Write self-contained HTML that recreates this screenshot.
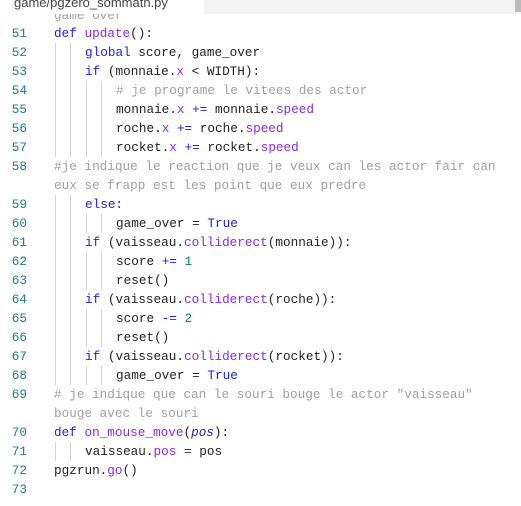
<!DOCTYPE html>
<html><head><meta charset="utf-8"><style>
body{margin:0;width:521px;height:506px;background:#fff;overflow:hidden;position:relative;font-family:"Liberation Mono",monospace;font-size:12.7px}
.hdr{position:absolute;left:0;top:0;width:521px;height:14px;background:#f3f3f3}
.tab{position:absolute;left:0;top:-6px;width:204px;height:20px;background:#fff;font-family:"Liberation Sans",sans-serif;font-size:13px;color:#444;padding-left:14px;box-sizing:border-box;line-height:18px}
.ln{position:absolute;left:0;width:27px;text-align:right;color:#237893;line-height:19px}
.c{position:absolute;white-space:pre;color:#222;line-height:19px}
.g{position:absolute;width:1px;background:#d3d3d3;height:19px}
.a{position:absolute;left:55px;width:1px;background:#d3d3d3}
.b{position:absolute;left:70px;width:1px;background:#d3d3d3}
.k{color:#1f1fdf}.f{color:#8a2be2}.cm{color:#a0a0a0}.n{color:#098658}.o{color:#1f1fdf}
</style></head><body>
<div class="hdr"></div>
<div class="tab">game/pgzero_sommath.py</div>
<div style="position:absolute;right:0;top:0;width:6px;height:12px;background:#bbb"></div>
<div class="c cm" style="left:54px;top:14px;clip-path:inset(8px 0 0 0);margin-top:-8px">game over</div>
<div class="a" style="top:43px;height:114px"></div><div class="b" style="top:43px;height:114px"></div>
<div class="a" style="top:195px;height:190px"></div><div class="b" style="top:195px;height:190px"></div>
<div class="a" style="top:442px;height:19px"></div><div class="b" style="top:442px;height:19px"></div>
<div class="ln" style="top:24px">51</div><div class="c" style="left:54px;top:24px"><span class="k">def</span> <span class="f">update</span>():</div>
<div class="ln" style="top:43px">52</div><div class="c" style="left:85px;top:43px"><span class="k">global</span> score, game_over</div>
<div class="ln" style="top:62px">53</div><div class="c" style="left:85px;top:62px"><span class="k">if</span> (monnaie.<span class="f">x</span> &lt; WIDTH):</div>
<div class="ln" style="top:81px">54</div><div class="g" style="left:86px;top:81px;height:76px"></div><div class="g" style="left:101px;top:81px;height:76px"></div><div class="c cm" style="left:116px;top:81px"># je programe le vitees des actor</div>
<div class="ln" style="top:100px">55</div><div class="c" style="left:116px;top:100px">monnaie.<span class="f">x</span> <span class="o">+=</span> monnaie.<span class="f">speed</span></div>
<div class="ln" style="top:119px">56</div><div class="c" style="left:116px;top:119px">roche.<span class="f">x</span> <span class="o">+=</span> roche.<span class="f">speed</span></div>
<div class="ln" style="top:138px">57</div><div class="c" style="left:116px;top:138px">rocket.<span class="f">x</span> <span class="o">+=</span> rocket.<span class="f">speed</span></div>
<div class="ln" style="top:157px">58</div><div class="c cm" style="left:54px;top:157px">#je indique le reaction que je veux can les actor fair can</div>
<div class="c cm" style="left:54px;top:176px">eux se frapp est les point que eux predre</div>
<div class="ln" style="top:195px">59</div><div class="c k" style="left:85px;top:195px">else:</div>
<div class="ln" style="top:214px">60</div><div class="g" style="left:86px;top:214px"></div><div class="g" style="left:101px;top:214px"></div><div class="c" style="left:116px;top:214px">game_over = <span class="k">True</span></div>
<div class="ln" style="top:233px">61</div><div class="c" style="left:85px;top:233px"><span class="k">if</span> (vaisseau.<span class="f">colliderect</span>(monnaie)):</div>
<div class="ln" style="top:252px">62</div><div class="g" style="left:86px;top:252px;height:38px"></div><div class="g" style="left:101px;top:252px;height:38px"></div><div class="c" style="left:116px;top:252px">score <span class="o">+=</span> <span class="n">1</span></div>
<div class="ln" style="top:271px">63</div><div class="c" style="left:116px;top:271px">reset()</div>
<div class="ln" style="top:290px">64</div><div class="c" style="left:85px;top:290px"><span class="k">if</span> (vaisseau.<span class="f">colliderect</span>(roche)):</div>
<div class="ln" style="top:309px">65</div><div class="g" style="left:86px;top:309px;height:38px"></div><div class="g" style="left:101px;top:309px;height:38px"></div><div class="c" style="left:116px;top:309px">score <span class="o">-=</span> <span class="n">2</span></div>
<div class="ln" style="top:328px">66</div><div class="c" style="left:116px;top:328px">reset()</div>
<div class="ln" style="top:347px">67</div><div class="c" style="left:85px;top:347px"><span class="k">if</span> (vaisseau.<span class="f">colliderect</span>(rocket)):</div>
<div class="ln" style="top:366px">68</div><div class="g" style="left:86px;top:366px"></div><div class="g" style="left:101px;top:366px"></div><div class="c" style="left:116px;top:366px">game_over = <span class="k">True</span></div>
<div class="ln" style="top:385px">69</div><div class="c cm" style="left:54px;top:385px"># je indique que can le souri bouge le actor "vaisseau"</div>
<div class="c cm" style="left:54px;top:404px">bouge avec le souri</div>
<div class="ln" style="top:423px">70</div><div class="c" style="left:54px;top:423px"><span class="k">def</span> <span class="f">on_mouse_move</span>(<i style="color:#1f1f9f">pos</i>):</div>
<div class="ln" style="top:442px">71</div><div class="c" style="left:85px;top:442px">vaisseau.<span class="f">pos</span> <span class="o">=</span> pos</div>
<div class="ln" style="top:461px">72</div><div class="c" style="left:54px;top:461px">pgzrun.<span class="f">go</span>()</div>
<div class="ln" style="top:480px">73</div>
</body></html>
